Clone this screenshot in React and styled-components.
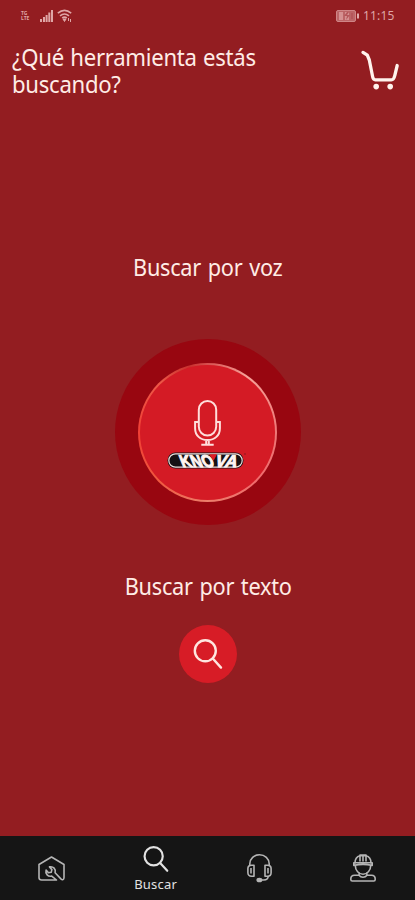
import React from "react";
import styled, { createGlobalStyle } from "styled-components";

const GlobalStyle = createGlobalStyle`
  *, *::before, *::after { box-sizing: border-box; }
  body { margin: 0; background: #931d21; }
  svg { display: block; flex: none; overflow: visible; }
`;

const Screen = styled.div`
  display: flex;
  flex-direction: column;
  width: 415px;
  height: 900px;
  overflow: hidden;
  background: #931d21;
  color: #ffece6;
  font-family: "Noto Sans", "Open Sans", sans-serif;
`;

const StatusBar = styled.div`
  display: flex;
  flex: none;
  justify-content: space-between;
  height: 30px;
  padding: 0 20px 0 21px;
  color: #dfa6a6;
`;

const StatusGroup = styled.div`
  display: flex;
  align-items: center;
  height: 31px;
  gap: ${(p) => p.$gap}px;
`;

const Network = styled.span`
  width: 9px;
  margin-right: 6px;
  font-size: 5px;
  font-weight: 700;
  line-height: 5px;
`;

const Clock = styled.time`
  width: 32px;
  font-size: 12px;
  line-height: 16px;
  letter-spacing: 0.15px;
  white-space: nowrap;
`;

const Header = styled.header`
  display: flex;
  flex: none;
  justify-content: space-between;
  height: 82px;
  padding: 14px 15px 0 12px;
`;

const Title = styled.h1`
  margin: 0;
  width: 250px;
  font-size: 23.5px;
  font-weight: 400;
  line-height: 27px;
  letter-spacing: -0.3px;
  word-spacing: 1px;
  white-space: nowrap;
  transform: scaleX(0.942);
  transform-origin: 0 0;
`;

const CartButton = styled.button`
  display: flex;
  align-items: flex-start;
  height: 50px;
  padding: 6px 0 0;
  border: 0;
  background: none;
  color: #fff3ed;
`;

const Main = styled.main`
  display: flex;
  flex: 1;
  flex-direction: column;
  align-items: center;
  padding-top: 140px;
`;

const Label = styled.h2`
  margin: 0 0 0 1px;
  height: 32px;
  font-size: 23.5px;
  font-weight: 400;
  line-height: 31px;
  letter-spacing: -0.3px;
  word-spacing: 1.5px;
  white-space: nowrap;
  transform: scaleX(0.925);
`;

const VoiceHalo = styled.div`
  display: flex;
  align-items: center;
  justify-content: center;
  width: 186px;
  height: 186px;
  margin: 55px 0 46px;
  border-radius: 50%;
  background: #980610;
`;

const VoiceButton = styled.button`
  width: 139px;
  height: 139px;
  padding: 2px;
  border: 0;
  border-radius: 50%;
  background: conic-gradient(#d8504f 0deg, #f7a39a 35deg, #ee7776 90deg, #f06b6c 135deg, #ec7f6c 180deg, #f0593f 225deg, #f03f35 270deg, #ee5948 315deg, #c9302e 345deg, #d8504f 360deg);
`;

const VoiceFace = styled.span`
  display: flex;
  flex-direction: column;
  align-items: center;
  width: 135px;
  height: 135px;
  padding-top: 35px;
  border-radius: 50%;
  background: #d41b25;
  color: #ffdedb;
`;

const BrandSlot = styled.span`
  display: block;
  margin: 6px 3px 0 0;
`;

const SearchButton = styled.button`
  display: flex;
  align-items: center;
  justify-content: center;
  width: 58px;
  height: 58px;
  margin-top: 22px;
  padding: 0;
  border: 0;
  border-radius: 50%;
  background: #d71c26;
  color: #ffe5df;
`;

const NavBar = styled.nav`
  display: grid;
  flex: none;
  grid-template-columns: repeat(4, 1fr);
  height: 64px;
  background: #151515;
`;

const NavItem = styled.button`
  display: flex;
  flex-direction: column;
  align-items: center;
  padding: ${(p) => (p.$active ? "10px" : p.$low ? "20px" : "18px")} 0 0;
  border: 0;
  background: none;
  color: ${(p) => (p.$active ? "#e2e2e2" : "#b5b5b5")};
  font-family: inherit;
`;

const NavLabel = styled.span`
  margin-top: 4px;
  font-size: 13px;
  line-height: 17px;
  letter-spacing: 0.2px;
`;

const SignalIcon = () => (
  <svg width="13" height="12" viewBox="0 0 13 12" fill="currentColor">
    <path d="M0 9h2v3H0zM3 7h2v5H3zM5.6 5h2v7h-2zM8.3 2.5h2V12h-2zM11 0h2v12h-2z" />
  </svg>
);

const WifiIcon = () => (
  <svg width="15" height="12" viewBox="0 0 15 12" fill="none" stroke="currentColor" strokeWidth="1.6">
    <path d="M.8 3.2Q7.5-2.3 14.2 3.2M3 5.8q4.5-3.5 9 0M5.2 8q2.3-1.8 4.6 0" />
    <path d="M6 9h3l-1.5 2.5zM11.5 8v3M13.5 9v3" fill="currentColor" strokeWidth="1" />
  </svg>
);

const BatteryIcon = () => (
  <svg width="23" height="12" viewBox="0 0 23 12">
    <rect x=".5" y=".5" width="19" height="11" rx="1.5" fill="#bc6466" stroke="#cf8586" />
    <path d="M3 2h4v8H3zM9 2h4v8H9z" fill="#d59091" />
    <path d="m11 2-3 4h3l-1 4 4-5h-3l2-3M15 3h2v6h-2z" fill="#b5565a" />
    <path d="M21 3.5h2v5h-2z" fill="#e0aaa9" />
  </svg>
);

const CartIcon = () => (
  <svg width="39" height="41" viewBox="0 0 39 41" fill="none" stroke="currentColor" strokeWidth="3.3" strokeLinecap="round" strokeLinejoin="round">
    <path d="M2 2.4 6.3 5.2 8.3 10l3.4 17c.4 2 1 2.8 2.6 2.8h16c2 0 2.8-1 3.4-4l2.5-10.3" />
    <circle cx="15.2" cy="36.6" r="2.8" fill="currentColor" stroke="none" />
    <circle cx="29.2" cy="36.6" r="2.8" fill="currentColor" stroke="none" />
  </svg>
);

const MicIcon = () => (
  <svg width="28" height="46" viewBox="0 0 28 46" fill="none" stroke="currentColor" strokeWidth="2">
    <rect x="4.8" y="1" width="17.4" height="34.5" rx="8.7" />
    <path d="M1.1 21.5v6.7C1.1 35.6 6.3 40 13.5 40s12.4-4.4 12.4-11.8v-6.7M.2 22h4.6M22.2 22h4.6M12.2 40v4.5M14.8 40v4.5M7.3 44.8h12.4" />
  </svg>
);

const BrandLogo = () => (
  <svg width="78" height="17" viewBox="0 0 78 17">
    <rect x=".5" y=".5" width="76" height="16" rx="8" fill="#171214" />
    <rect x="1.8" y="1.8" width="73.4" height="13.4" rx="6.7" fill="none" stroke="#eadfdd" strokeWidth="1.2" />
    <g fill="#fff5f2" stroke="#fff5f2" strokeWidth="1" fontFamily="Liberation Sans, Arial, sans-serif" fontWeight="700" fontSize="17">
      <text transform="translate(15.5 14.5) skewX(22)" textLength="33" lengthAdjust="spacingAndGlyphs">KNO</text>
      <text transform="translate(47 14.5) skewX(-18)" textLength="22" lengthAdjust="spacingAndGlyphs">VA</text>
    </g>
    <path d="m42 2.2 8 .1-3.4 6.4z" fill="#e21b25" />
    <circle cx="78" cy="2" r=".8" fill="#811a21" />
  </svg>
);

const SearchIcon = ({ size, weight }) => (
  <svg width={size} height={size} viewBox="0 0 30 30" fill="none" stroke="currentColor" strokeWidth={weight} strokeLinecap="round">
    <circle cx="12.3" cy="11.8" r="10.5" />
    <path d="m19.8 19.5 8.2 9.1" />
  </svg>
);

const GarageIcon = () => (
  <svg width="27" height="26" viewBox="0 0 27 26" fill="none" stroke="currentColor" strokeWidth="1.6" strokeLinejoin="round" strokeLinecap="round">
    <path d="M18.5 24H3.6C1.8 24 1 23.2 1 21.6V8.5L13.5 1 26 8.5v13c0 2.3-1.6 2.9-3.1 1.4l-5.8-6.1c1-3.6-1.8-6.8-5.6-5.9l2.4 2.7-.7 2.6-2.7.5-2.4-2.6c-1.1 3.7 2 7 5.6 6z" />
  </svg>
);

const HeadsetIcon = () => (
  <svg width="25" height="28" viewBox="0 0 25 28" fill="none" stroke="currentColor" strokeWidth="1.6" strokeLinejoin="round">
    <path d="M2.8 12V9.8a9.7 9.1 0 0 1 19.4 0V12" />
    <path d="M4.5 11.2H7v11H4.5c-2.3 0-3.6-1.5-3.6-3.4v-4.2c0-2 1.3-3.4 3.6-3.4zM20.5 11.2H18v11h2.5c2.3 0 3.6-1.5 3.6-3.4v-4.2c0-2-1.3-3.4-3.6-3.4zM4 14v5.4M21 14v5.4" />
    <path d="M21.2 22c0 3-1.4 4-4.5 4H14" />
    <ellipse cx="12.4" cy="26" rx="2.2" ry="1.5" fill="currentColor" />
  </svg>
);

const WorkerIcon = () => (
  <svg width="26" height="28" viewBox="0 0 26 28" fill="none" stroke="currentColor" strokeWidth="1.6" strokeLinejoin="round" strokeLinecap="round">
    <path d="M5 9c0-4.1 1.8-6.4 5-7.2h6c3.2.8 5 3.1 5 7.2" />
    <path d="M10 7V1h6v6M13 1v6M3.8 8.8h18.4v2.6c-6-1.4-12.4-1.4-18.4 0z" />
    <path d="M5.3 11.5c0 5.1 3.5 8.7 7.7 8.7s7.7-3.6 7.7-8.7" />
    <path d="m9.3 19.4-.3 1.8H4.5C2 21.2.8 22.8.8 25v.6c0 1 .5 1.4 1.4 1.4h21.6c.9 0 1.4-.4 1.4-1.4V25c0-2.2-1.2-3.8-3.7-3.8H17l-.3-1.8M9 21.3c2 2.5 6 2.5 8 0" />
  </svg>
);

export default function App() {
  return (
    <>
      <GlobalStyle />
      <Screen>
        <StatusBar>
          <StatusGroup $gap={4}>
            <Network>TG<br />LTE</Network>
            <SignalIcon />
            <WifiIcon />
          </StatusGroup>
          <StatusGroup $gap={4}>
            <BatteryIcon />
            <Clock>11:15</Clock>
          </StatusGroup>
        </StatusBar>
        <Header>
          <Title>¿Qué herramienta estás<br />buscando?</Title>
          <CartButton aria-label="Carrito"><CartIcon /></CartButton>
        </Header>
        <Main>
          <Label>Buscar por voz</Label>
          <VoiceHalo>
            <VoiceButton aria-label="Buscar por voz">
              <VoiceFace>
                <MicIcon />
                <BrandSlot><BrandLogo /></BrandSlot>
              </VoiceFace>
            </VoiceButton>
          </VoiceHalo>
          <Label>Buscar por texto</Label>
          <SearchButton aria-label="Buscar por texto"><SearchIcon size={30} weight={2.4} /></SearchButton>
        </Main>
        <NavBar>
          <NavItem $low aria-label="Taller"><GarageIcon /></NavItem>
          <NavItem $active>
            <SearchIcon size={26} weight={2.5} />
            <NavLabel>Buscar</NavLabel>
          </NavItem>
          <NavItem aria-label="Soporte"><HeadsetIcon /></NavItem>
          <NavItem aria-label="Perfil"><WorkerIcon /></NavItem>
        </NavBar>
      </Screen>
    </>
  );
}
